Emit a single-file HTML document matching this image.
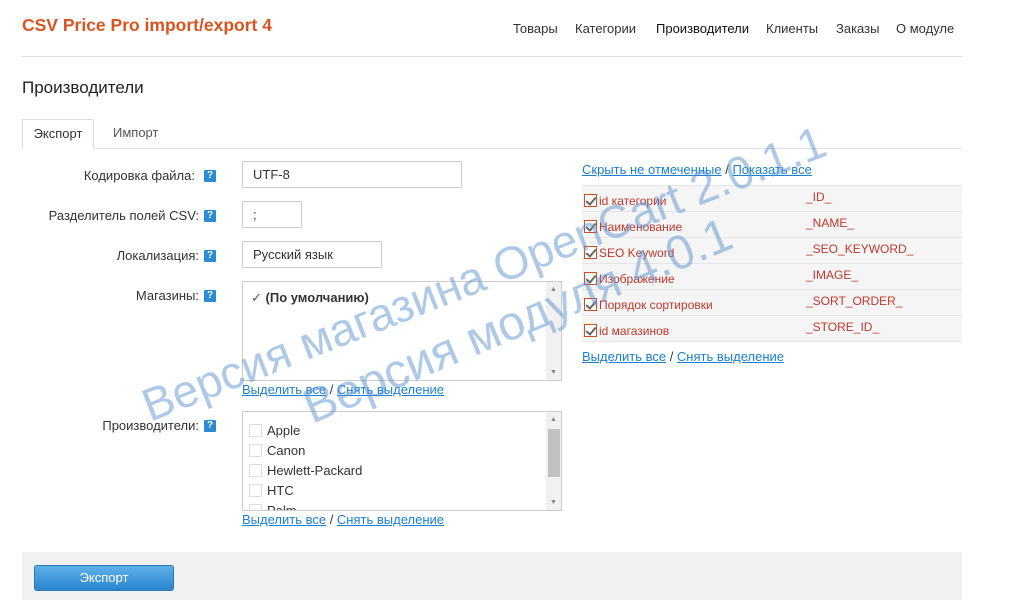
<!DOCTYPE html>
<html><head><meta charset="utf-8"><style>
*{box-sizing:border-box;margin:0;padding:0}
body{width:1024px;height:600px;background:#fff;font-family:"Liberation Sans",sans-serif;font-size:13px;color:#333;position:relative;overflow:hidden}
.abs{position:absolute}
.title{left:22px;top:15px;color:#d9541e;font-weight:bold;font-size:17.5px}
.nav{top:21px;font-size:13px;color:#333}
.hr{left:22px;width:940px;top:56px;height:1px;background:#ddd}
.h{left:22px;top:78px;font-size:17px;color:#222}
.tab{top:119px;left:22px;width:72px;height:30px;border:1px solid #ddd;border-bottom:1px solid #fff;background:#fff;text-align:center;line-height:28px;color:#333;z-index:2}
.tab2{top:119px;left:113px;line-height:28px;color:#555}
.tabline{top:148px;left:22px;width:940px;height:1px;background:#ddd}
.lbl{text-align:right;width:175px;left:20px}
.q{width:12px;height:12px;background:#2b8ad4;color:#fff;font-size:10px;font-weight:bold;line-height:12px;text-align:center;left:204px;border-radius:1px}
.inp{left:242px;height:27px;border:1px solid #ccc;border-radius:2px;padding-left:10px;line-height:25px;color:#333}
.box{left:242px;width:320px;border:1px solid #ccc}
.sb{right:0;top:0;width:15px;bottom:0;background:#f1f1f1}
.lnk{color:#1a7fd0;text-decoration:underline}
.cb{display:inline-block;width:13px;height:13px;border:1px solid #ddd;vertical-align:-2px;margin-right:5px;background:#fff}
.row{left:582px;width:380px;height:26px;border-top:1px solid #e5e5e5;background:#f5f5f5;color:#c0392b;font-size:12px}
.row .a{position:absolute;left:2px;top:8px}
.row .b{position:absolute;left:224px;top:4px}
.ck{display:inline-block;width:13px;height:13px;border:1px solid #c9501c;vertical-align:-2px;margin-right:2px;position:relative;background:#fff}
.ck:after{content:"";position:absolute;left:3px;top:0px;width:4px;height:8px;border-right:2px solid #666;border-bottom:2px solid #666;transform:rotate(40deg)}
</style></head><body>
<div class="abs title">CSV Price Pro import/export 4</div>
<div class="abs nav" style="left:513px">Товары</div>
<div class="abs nav" style="left:575px">Категории</div>
<div class="abs nav" style="left:656px;color:#111">Производители</div>
<div class="abs nav" style="left:766px">Клиенты</div>
<div class="abs nav" style="left:836px">Заказы</div>
<div class="abs nav" style="left:896px">О модуле</div>
<div class="abs hr"></div>
<div class="abs h">Производители</div>
<div class="abs tab">Экспорт</div>
<div class="abs tab2">Импорт</div>
<div class="abs tabline"></div>

<div class="abs lbl" style="top:168px">Кодировка файла:</div><div class="abs q" style="top:170px">?</div>
<div class="abs inp" style="top:161px;width:220px">UTF-8</div>
<div class="abs lbl" style="top:208px;left:24px">Разделитель полей CSV:</div><div class="abs q" style="top:210px">?</div>
<div class="abs inp" style="top:201px;width:60px">;</div>
<div class="abs lbl" style="top:248px;left:24px">Локализация:</div><div class="abs q" style="top:250px">?</div>
<div class="abs inp" style="top:241px;width:140px">Русский язык</div>
<div class="abs lbl" style="top:288px;left:24px">Магазины:</div><div class="abs q" style="top:290px">?</div>
<div class="abs box" style="top:281px;height:100px"><div class="abs sb"><div style="text-align:center;font-size:7px;color:#888;margin-top:4px">▲</div><div style="position:absolute;bottom:4px;width:15px;text-align:center;font-size:7px;color:#888">▼</div></div>
<div class="abs" style="left:8px;top:8px;font-weight:bold"><span style="color:#555;font-weight:normal">✓</span> (По умолчанию)</div></div>
<div class="abs" style="left:242px;top:382px"><span class="lnk">Выделить все</span> / <span class="lnk">Снять выделение</span></div>
<div class="abs lbl" style="top:418px;left:24px">Производители:</div><div class="abs q" style="top:420px">?</div>
<div class="abs box" style="top:411px;height:100px;overflow:hidden"><div class="abs sb"><div style="text-align:center;font-size:7px;color:#888;margin-top:4px">▲</div><div style="position:absolute;left:2px;width:12px;top:17px;height:48px;background:#c1c1c1"></div><div style="position:absolute;bottom:4px;width:15px;text-align:center;font-size:7px;color:#888">▼</div></div>
<div class="abs" style="left:6px;top:9px;line-height:20px"><div><span class="cb"></span>Apple</div><div><span class="cb"></span>Canon</div><div><span class="cb"></span>Hewlett-Packard</div><div><span class="cb"></span>HTC</div><div><span class="cb"></span>Palm</div></div></div>
<div class="abs" style="left:242px;top:512px"><span class="lnk">Выделить все</span> / <span class="lnk">Снять выделение</span></div>

<div class="abs" style="left:582px;top:162px"><span class="lnk">Скрыть не отмеченные</span> / <span class="lnk">Показать все</span></div>
<div class="abs row" style="top:185px"><span class="a"><span class="ck"></span>id категории</span><span class="b">_ID_</span></div>
<div class="abs row" style="top:211px"><span class="a"><span class="ck"></span>Наименование</span><span class="b">_NAME_</span></div>
<div class="abs row" style="top:237px"><span class="a"><span class="ck"></span>SEO Keyword</span><span class="b">_SEO_KEYWORD_</span></div>
<div class="abs row" style="top:263px"><span class="a"><span class="ck"></span>Изображение</span><span class="b">_IMAGE_</span></div>
<div class="abs row" style="top:289px"><span class="a"><span class="ck"></span>Порядок сортировки</span><span class="b">_SORT_ORDER_</span></div>
<div class="abs row" style="top:315px;border-bottom:1px solid #e5e5e5;height:27px"><span class="a"><span class="ck"></span>id магазинов</span><span class="b">_STORE_ID_</span></div>
<div class="abs" style="left:582px;top:349px"><span class="lnk">Выделить все</span> / <span class="lnk">Снять выделение</span></div>

<div class="abs" style="left:22px;top:552px;width:940px;height:48px;background:#f2f2f2"></div>
<div class="abs" style="left:34px;top:565px;width:140px;height:26px;border-radius:3px;background:linear-gradient(#5fb0e8,#2a85d0);border:1px solid #2a78c0;color:#fff;text-align:center;line-height:24px">Экспорт</div>

<svg class="abs" style="left:0;top:0" width="1024" height="600"><g fill="#5b93cf" fill-opacity="0.5" font-family="Liberation Sans,sans-serif">
<text x="150" y="422" font-size="46" transform="rotate(-21.5 150 422)">Версия магазина OpenCart 2.0.1.1</text>
<text x="312" y="424" font-size="48" transform="rotate(-22.7 312 424)">Версия модуля 4.0.1</text></g></svg>
</body></html>
